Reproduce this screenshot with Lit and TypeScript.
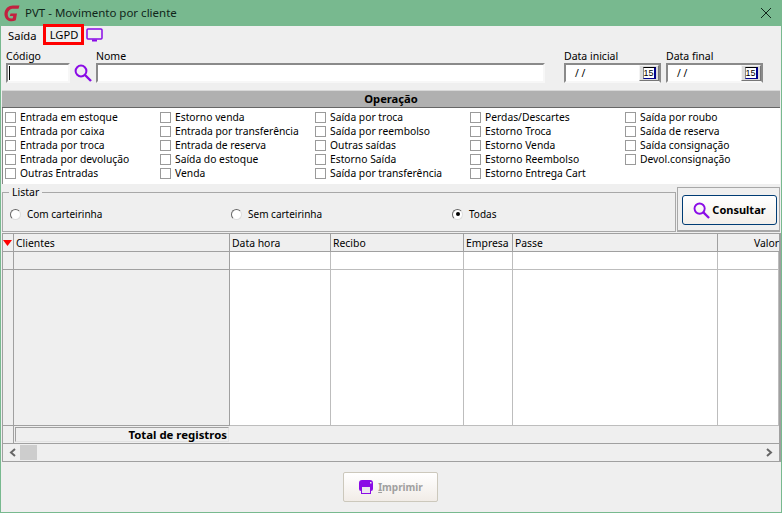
import { LitElement, html, css } from "lit";
import { customElement } from "lit/decorators.js";

const cols = [
  ["Entrada em estoque", "Entrada por caixa", "Entrada por troca", "Entrada por devolução", "Outras Entradas"],
  ["Estorno venda", "Entrada por transferência", "Entrada de reserva", "Saída do estoque", "Venda"],
  ["Saída por troca", "Saída por reembolso", "Outras saídas", "Estorno Saída", "Saída por transferência"],
  ["Perdas/Descartes", "Estorno Troca", "Estorno Venda", "Estorno Reembolso", "Estorno Entrega Cart"],
  ["Saída por roubo", "Saída de reserva", "Saída consignação", "Devol.consignação"],
];

const lens = (s: number) => html`<svg width=${s} height=${s} viewBox="0 0 18 18" fill="none" stroke="#8a0be6"><circle cx="7" cy="7" r="5.4" stroke-width="2"/><path d="M11 11l6 6" stroke-width="2.4"/></svg>`;

@customElement("app-root")
export class AppRoot extends LitElement {
  static styles = css`
    :host { display: block; width: 782px; height: 513px; font-family: "Noto Sans", sans-serif; font-size: 10.3px; color: #000; overflow: hidden; }
    .win { box-sizing: border-box; height: 513px; background: #efefef; border: 1px solid #78b98f; border-top: 0; display: flex; flex-direction: column; }
    .title { height: 26px; margin: 0 -1px; background: #78b98f; display: flex; align-items: center; padding: 0 10px 0 4px; gap: 5px; font-size: 11.5px; color: #10261a; flex: none; }
    .title .t { flex: 1; padding-bottom: 1px; }
    .menu { height: 19px; display: flex; align-items: center; flex: none; position: relative; padding-left: 7px; font-size: 11.2px; }
    .menu .sa { width: 28px; }
    .menu .lgpd { box-sizing: border-box; height: 21px; margin: -2px 0 0 7px; border: 3px solid #f00; display: flex; align-items: center; width: 41px; justify-content: center; align-self: flex-start; padding-left: 1px; }
    .menu svg { margin-left: 2px; }
    .fields { display: flex; box-sizing: border-box; height: 45px; padding: 5px 0 0 5px; flex: none; }
    .f { display: flex; flex-direction: column; }
    .f label { height: 13px; line-height: 12px; font-size: 10.5px; }
    .inp { box-sizing: border-box; height: 20px; background: #fff; border: 2px solid; border-color: #8a8a8a #f7f7f7 #f7f7f7 #8a8a8a; display: flex; align-items: center; }
    .code { width: 64px; }
    .caret { width: 1px; height: 14px; background: #000; margin-left: 1px; }
    .lens { width: 26px; display: flex; align-items: center; justify-content: center; margin-top: 13px; height: 20px; }
    .nome { width: 449px; margin-right: 19px; }
    .date { width: 97px; padding-left: 9px; justify-content: space-between; border-right-color: #8a8a8a; }
    .d1 { margin-right: 5px; }
    .cal { box-sizing: border-box; width: 20px; height: 16px; background: #dcdcdc; border: 1px solid; border-color: #f4f4f4 #777 #777 #f4f4f4; display: flex; align-items: center; justify-content: center; }
    .cal b { box-sizing: border-box; width: 13px; height: 12px; background: #fff; border-top: 1px solid #000; border-left: 1px solid #888; border-right: 2px solid #00008c; border-bottom: 1px solid #00008c; font-size: 9px; font-weight: 400; line-height: 10px; text-align: center; letter-spacing: 0; font-family: "Liberation Sans", sans-serif; }
    .op { flex: none; margin: 0 1px; height: 18px; box-sizing: border-box; border-top: 1px solid #d8d8d8; border-bottom: 1px solid #666; background: #b0b0b0; text-align: center; font-weight: 700; font-size: 11.2px; line-height: 15px; }
    .checks { flex: none; margin: 0 1px; height: 76px; background: #fff; border-left: 1px solid #888; box-sizing: border-box; padding: 2px 0 0 2px; display: grid; grid-template-columns: repeat(5, 155px); }
    .col { display: flex; flex-direction: column; }
    .ck { height: 14px; display: flex; align-items: center; gap: 4px; white-space: nowrap; }
    .box { box-sizing: border-box; width: 11px; height: 11px; border: 1px solid #9a9a9a; background: #fff; flex: none; }
    .mid { flex: none; display: flex; height: 48px; margin: 0 1px; gap: 1px; }
    .listar { box-sizing: border-box; flex: none; width: 674px; margin-top: 8px; height: 40px; border: 1px solid #a8a8a8; position: relative; display: grid; grid-template-columns: 221px 221px 1fr; align-items: center; padding: 4px 0 0 7px; font-size: 10px; }
    .legend { position: absolute; left: 6px; top: -7px; background: #efefef; padding: 0 3px; height: 12px; line-height: 12px; font-size: 10.5px; }
    .radio { display: flex; align-items: center; gap: 6px; white-space: nowrap; }
    .rb { width: 11px; height: 11px; border-radius: 50%; box-sizing: border-box; background: #fff; border: 1px solid; border-color: #666 #ddd #ddd #666; display: flex; align-items: center; justify-content: center; flex: none; }
    .rb i { width: 4px; height: 4px; border-radius: 50%; background: #000; display: block; }
    .cons { box-sizing: border-box; flex: none; width: 103px; margin-top: 3px; height: 45px; border: 1px solid #a8a8a8; border-bottom-width: 2px; padding: 7px 0 0 4px; }
    .btn { box-sizing: border-box; border-radius: 3px; width: 95px; height: 30px; border: 1px solid #003c74; background: linear-gradient(#fff, #f3efea); display: flex; align-items: center; justify-content: center; gap: 2px; font-weight: 700; font-size: 11px; }
    .btn span { padding-bottom: 2px; }
    .grid { flex: none; margin: 1px 0 0 1px; width: 779px; box-sizing: border-box; border-right: 2px solid #a0a0a0; border-left: 1px solid #a0a0a0; border-top: 1px solid #a0a0a0; display: grid; grid-template-columns: 11px 216px 101px 133px 49px 205px 1fr; grid-template-rows: 18px 18px 156px 18px 18px; }
    .c { box-sizing: border-box; border-right: 1px solid #bdbdbd; border-bottom: 1px solid #bdbdbd; background: #fff; }
    .g { background: #efefef; border-color: #a0a0a0; }
    .h { background: #efefef; border-color: #a0a0a0; padding-left: 2px; line-height: 18px; font-size: 10.4px; white-space: nowrap; }
    .r { text-align: right; border-right: 0; }
    .tri { display: flex; align-items: center; justify-content: center; padding: 0 1px 0 0; }
    .foot { grid-column: 1 / -1; box-sizing: border-box; background: #efefef; border-bottom: 1px solid #a0a0a0; display: flex; align-items: center; }
    .foot .lead { width: 11px; height: 100%; box-sizing: border-box; border-right: 1px solid #a0a0a0; flex: none; }
    .total { box-sizing: border-box; width: 214px; height: 15px; margin-left: 1px; border: 1px solid; border-color: #a0a0a0 #e2e2e2 #e2e2e2 #a0a0a0; text-align: right; font-weight: 700; line-height: 13px; padding-right: 1px; font-size: 11.4px; }
    .scroll { grid-column: 1 / -1; background: #efefef; display: flex; align-items: center; border-bottom: 1px solid #a0a0a0; box-sizing: border-box; justify-content: space-between; padding: 0 6px 0 6px; }
    .scroll .l { display: flex; align-items: center; gap: 4px; }
    .thumb { width: 17px; height: 15px; background: #cdcdcd; }
    .bottom { flex: 1; display: flex; padding: 10px 0 0 342px; }
    .print { box-sizing: border-box; width: 95px; height: 30px; border: 1px solid #ccc8bc; border-radius: 2px; background: linear-gradient(#fff, #f1ece7); display: flex; align-items: center; justify-content: center; gap: 4px; font-weight: 700; color: #a0a0a0; font-size: 10px; }
    u { text-decoration: underline; }
  `;

  render() {
    return html`<div class="win">
      <div class="title">
        <svg width="16" height="17" viewBox="0 0 16 17"><path d="M9 .5C4.5.5 1 3.6.5 8c-.5 4.700 2.700 8.300 7 8.300 1.500 0 3-.4 4.300-1.100l1.200-6.700H6.500L5.800 11h3.400l-.4 2.300c-.5.2-1 .2-1.400.2-2.500 0-4-2-3.700-5C4 6 6 3.700 9 3.700h5.500L15.500 .5z" fill="#c2213f"/></svg>
        <span class="t">PVT - Movimento por cliente</span>
        <svg width="12" height="12" viewBox="0 0 12 12" stroke="#10261a" fill="none"><path d="M1 1l10 10M11 1L1 11"/></svg>
      </div>
      <div class="menu">
        <span class="sa">Saída</span>
        <span class="lgpd">LGPD</span>
        <svg width="17" height="15" viewBox="0 0 17 15" fill="none" stroke="#8a0be6"><rect x="1" y="1" width="15" height="10" rx="1" stroke-width="1.5"/><path d="M6 12.500h5" stroke-width="2"/></svg>
      </div>
      <div class="fields">
        <div class="f"><label>Código</label><div class="inp code"><span class="caret"></span></div></div>
        <div class="lens">${lens(18)}</div>
        <div class="f"><label>Nome</label><div class="inp nome"></div></div>
        <div class="f d1"><label>Data inicial</label><div class="inp date"><span>/ /</span><span class="cal"><b>15</b></span></div></div>
        <div class="f"><label>Data final</label><div class="inp date"><span>/ /</span><span class="cal"><b>15</b></span></div></div>
      </div>
      <div class="op">Operação</div>
      <div class="checks">
        ${cols.map((c) => html`<div class="col">${c.map((t) => html`<div class="ck"><span class="box"></span><span>${t}</span></div>`)}</div>`)}
      </div>
      <div class="mid">
        <div class="listar">
          <span class="legend">Listar</span>
          <div class="radio"><span class="rb"></span>Com carteirinha</div>
          <div class="radio"><span class="rb"></span>Sem carteirinha</div>
          <div class="radio"><span class="rb"><i></i></span>Todas</div>
        </div>
        <div class="cons"><div class="btn">${lens(17)}<span>Consultar</span></div></div>
      </div>
      <div class="grid">
        <div class="c h tri"><svg width="9" height="6" viewBox="0 0 9 6"><path d="M0 0h9L4.5 6z" fill="#f00"/></svg></div>
        <div class="c h">Clientes</div><div class="c h">Data hora</div><div class="c h">Recibo</div><div class="c h">Empresa</div><div class="c h">Passe</div><div class="c h r">Valor</div>
        <div class="c g"></div><div class="c g"></div><div class="c"></div><div class="c"></div><div class="c"></div><div class="c"></div><div class="c"></div>
        <div class="c g"></div><div class="c g"></div><div class="c"></div><div class="c"></div><div class="c"></div><div class="c"></div><div class="c"></div>
        <div class="foot"><div class="lead"></div><div class="total">Total de registros</div></div>
        <div class="scroll">
          <div class="l"><svg width="7" height="9" viewBox="0 0 7 9" fill="none" stroke="#666" stroke-width="2"><path d="M6 1L2 4.500 6 8"/></svg><span class="thumb"></span></div>
          <svg width="7" height="9" viewBox="0 0 7 9" fill="none" stroke="#666" stroke-width="2"><path d="M1 1l4 3.500L1 8"/></svg>
        </div>
      </div>
      <div class="bottom">
        <div class="print">
          <svg width="16" height="16" viewBox="0 0 16 16"><path d="M4 1h8a3 3 0 0 1 3 3v6a2 2 0 0 1-2 2v3H3v-3a2 2 0 0 1-2-2V4a3 3 0 0 1 3-3z" fill="#8a0be6"/><rect x="4" y="8" width="8" height="6" fill="#ece6ee"/><rect x="12" y="3" width="1.500" height="1.500" fill="#ece6ee"/></svg>
          <span><u>I</u>mprimir</span>
        </div>
      </div>
    </div>`;
  }
}
